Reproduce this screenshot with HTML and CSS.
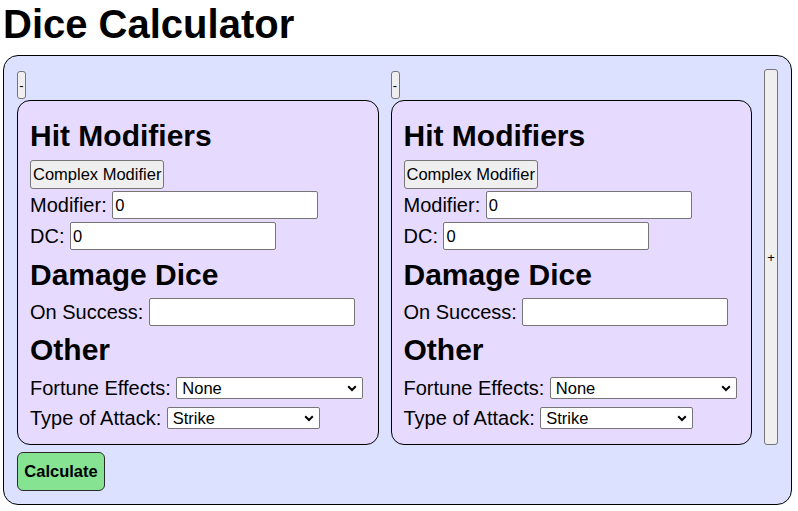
FILE: index.html
```html
<!DOCTYPE html>
<html lang="en">
<head>
<meta charset="utf-8">
<title>Dice Calculator</title>
<link rel="stylesheet" href="styles.css">
</head>
<body>
<h1 class="title">Dice Calculator</h1>
<div class="calculator">
  <div class="columns">
    <div class="column">
      <button class="remove">-</button>
      <div class="card">
        <h2 class="section first">Hit Modifiers</h2>
        <button class="complex">Complex Modifier</button>
        <div class="field f-mod"><label>Modifier:</label><input class="text-input" type="text" value="0"></div>
        <div class="field f-dc"><label>DC:</label><input class="text-input" type="text" value="0"></div>
        <h2 class="section s-damage">Damage Dice</h2>
        <div class="field f-success"><label>On Success:</label><input class="text-input" type="text" value=""></div>
        <h2 class="section s-other">Other</h2>
        <div class="field f-fortune"><label>Fortune Effects:</label><span class="select-wrap"><select class="select fortune"><option>None</option></select><svg class="chev" width="10" height="7" viewBox="0 0 10 7"><path d="M1.2 1.3 L5 5 L8.8 1.3" fill="none" stroke="#000" stroke-width="2"/></svg></span></div>
        <div class="field f-attack"><label>Type of Attack:</label><span class="select-wrap"><select class="select attack"><option>Strike</option></select><svg class="chev" width="10" height="7" viewBox="0 0 10 7"><path d="M1.2 1.3 L5 5 L8.8 1.3" fill="none" stroke="#000" stroke-width="2"/></svg></span></div>
      </div>
    </div>
    <div class="column">
      <button class="remove">-</button>
      <div class="card">
        <h2 class="section first">Hit Modifiers</h2>
        <button class="complex">Complex Modifier</button>
        <div class="field f-mod"><label>Modifier:</label><input class="text-input" type="text" value="0"></div>
        <div class="field f-dc"><label>DC:</label><input class="text-input" type="text" value="0"></div>
        <h2 class="section s-damage">Damage Dice</h2>
        <div class="field f-success"><label>On Success:</label><input class="text-input" type="text" value=""></div>
        <h2 class="section s-other">Other</h2>
        <div class="field f-fortune"><label>Fortune Effects:</label><span class="select-wrap"><select class="select fortune"><option>None</option></select><svg class="chev" width="10" height="7" viewBox="0 0 10 7"><path d="M1.2 1.3 L5 5 L8.8 1.3" fill="none" stroke="#000" stroke-width="2"/></svg></span></div>
        <div class="field f-attack"><label>Type of Attack:</label><span class="select-wrap"><select class="select attack"><option>Strike</option></select><svg class="chev" width="10" height="7" viewBox="0 0 10 7"><path d="M1.2 1.3 L5 5 L8.8 1.3" fill="none" stroke="#000" stroke-width="2"/></svg></span></div>
      </div>
    </div>
    <button class="add">+</button>
  </div>
  <button class="calculate">Calculate</button>
</div>
</body>
</html>
```
FILE: styles.css
```css
html, body {
  background: #ffffff;
}
body {
  margin: 0 3px;
  font-family: "Liberation Sans", Arial, sans-serif;
  font-size: 20px;
  color: #000;
}
.title {
  margin: 1px 0 8px;
  font-size: 40px;
  line-height: 46px;
  font-weight: bold;
}
.calculator {
  box-sizing: border-box;
  width: 789px;
  height: 450px;
  border: 1px solid #000;
  border-radius: 15px;
  background: #dce1ff;
  padding: 13px 13px 12px 13px;
  display: flex;
  flex-direction: column;
  align-items: flex-start;
}
.columns {
  display: flex;
  gap: 12px;
  align-items: stretch;
  width: 100%;
}
.column {
  flex: 1 1 0;
  display: flex;
  flex-direction: column;
  align-items: flex-start;
}
button {
  font-family: "Liberation Sans", Arial, sans-serif;
  color: #000;
  background: #efefef;
  border: 1px solid #767676;
  border-radius: 3px;
  box-sizing: border-box;
  padding: 0;
}
.remove {
  margin-top: 2px;
  width: 9px;
  height: 28px;
  font-size: 13px;
}
.add {
  width: 14px;
  flex: 0 0 14px;
  font-size: 13px;
}
.card {
  box-sizing: border-box;
  width: 100%;
  margin-top: 1px;
  border: 1px solid #000;
  border-radius: 13px;
  background: #e6dbff;
  padding: 0 12px 15px;
  display: flex;
  flex-direction: column;
  align-items: flex-start;
}
.section {
  margin: 0;
  font-size: 30px;
  line-height: 34px;
  font-weight: bold;
}
.section.first { margin-top: 18px; }
.section.s-damage { margin-top: 8px; }
.section.s-other { margin-top: 7px; }
.complex {
  margin-top: 7px;
  height: 29px;
  padding: 0 2px;
  font-size: 16.5px;
}
.field {
  display: flex;
  align-items: center;
  gap: 5.5px;
  height: 28px;
  white-space: nowrap;
}
.f-mod { margin-top: 2px; }
.f-dc { margin-top: 3px; }
.f-success { margin-top: 6px; }
.f-fortune { margin-top: 10px; height: 22px; }
.f-attack { margin-top: 8px; height: 22px; }
.text-input {
  box-sizing: border-box;
  width: 206px;
  height: 28px;
  border: 1px solid #767676;
  border-radius: 2px;
  padding: 1px 2px;
  font-family: "Liberation Sans", Arial, sans-serif;
  font-size: 16.5px;
  color: #000;
  background: #fff;
}
.select-wrap {
  position: relative;
  display: inline-flex;
}
.select {
  appearance: none;
  -webkit-appearance: none;
  box-sizing: border-box;
  height: 22px;
  border: 1px solid #767676;
  border-radius: 2px;
  background: #fff;
  font-family: "Liberation Sans", Arial, sans-serif;
  font-size: 16.5px;
  color: #000;
  padding: 0 20px 0 5px;
}
.chev {
  position: absolute;
  right: 6px;
  top: 8px;
  pointer-events: none;
}
.fortune { width: 187px; }
.attack { width: 153px; }
.calculate {
  margin-top: 7px;
  width: 88px;
  height: 39px;
  background: #86e391;
  border: 1px solid #2b2b2b;
  border-radius: 6px;
  font-size: 16.5px;
  font-weight: bold;
}
```
